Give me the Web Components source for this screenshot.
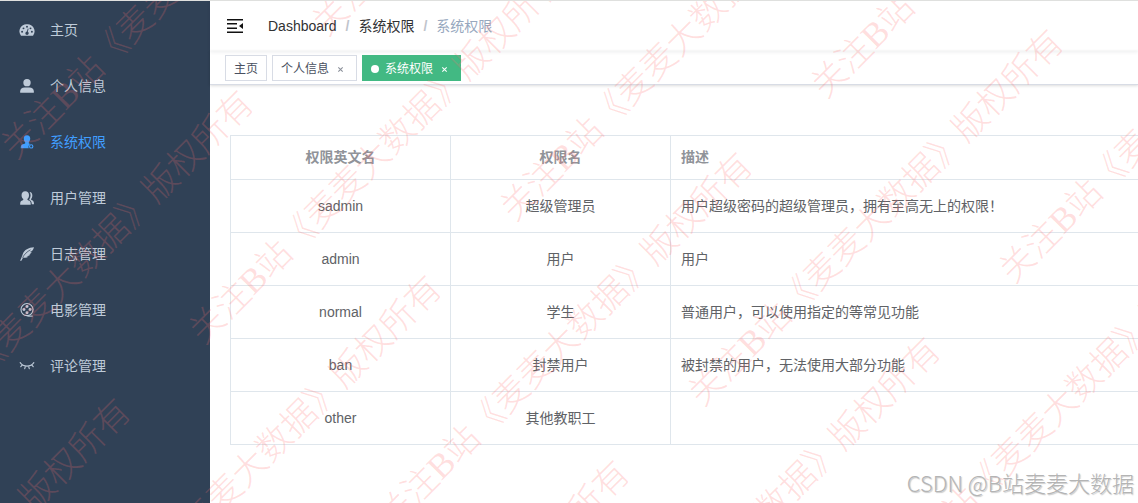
<!DOCTYPE html>
<html lang="zh-CN">
<head>
<meta charset="utf-8">
<meta name="viewport" content="width=device-width, initial-scale=1">
<title>系统权限</title>
<style>
  body {
    margin: 0;
    font: 14px/20px "Liberation Sans", "Noto Sans CJK SC", sans-serif;
    color: #606266;
    background: #fff;
  }
</style>
</head>
<body>
<admin-app></admin-app>

<script>
const ICONS = {
  dashboard: `<path fill-rule="evenodd" d="M8 1.500a8 8 0 0 0-7.200 12.500q.3.600 1 .6h12.400q.7 0 1-.6A8 8 0 0 0 8 1.500zM8 3.200a1.100 1.100 0 1 1 0 2.200 1.100 1.100 0 0 1 0-2.200zM4 5a1.100 1.100 0 1 1 0 2.200A1.100 1.100 0 0 1 4 5zM12 5a1.100 1.100 0 1 1 0 2.200A1.100 1.100 0 0 1 12 5zM2.400 8.900a1.100 1.100 0 1 1 0 2.200 1.100 1.100 0 0 1 0-2.200zM13.600 8.900a1.100 1.100 0 1 1 0 2.200 1.100 1.100 0 0 1 0-2.200zM8.900 6.300l.9.200-.9 3.500a1.900 1.900 0 1 1-1-.2z"/>`,
  user: `<circle cx="8" cy="4.200" r="4.200"/><path d="M.2 15.800v-1.600c0-2.800 2.200-4.600 5-4.600h5.600c2.800 0 5 1.800 5 4.600v1.600z"/>`,
  system: `<path d="M8 .2c2.500 0 3.900 1.700 3.700 4.200-.1 1.900-.8 3-1.600 3.900v1.400l2 .7a3.300 3.300 0 0 0-2.100 4.600H.8c.1-3 .6-3.700 2.500-4.400l2.600-.9V8.300C5 7.400 4.400 6.300 4.300 4.400 4.100 1.900 5.500.2 8 .2z"/><circle cx="12.800" cy="13" r="1.900" fill="none" stroke="currentColor" stroke-width="1.300"/>`,
  people: `<path d="M6 .2c2.900 0 4.500 2 4.300 4.800-.1 1.900-.9 3.300-1.900 4.200.1 1 .3 1.200 1.500 1.700 2 .8 2.400 1.700 2.400 4.900H.2c0-3.200.4-4.100 2.300-4.900 1.100-.5 1.300-.8 1.300-1.700C2.800 8.300 1.900 6.900 1.800 5 1.600 2.200 3.200.2 6 .2z"/><path d="M11 1.100c2 .2 3.200 1.800 3.100 4.200-.1 1.700-.7 2.900-1.500 3.700.1.700.3 1 1.300 1.500 1.600.8 2.100 1.900 2.100 4.700h-2.500c-.1-2.600-.8-3.800-2.400-4.600-.7-.3-.7-.8-.2-1.600 1.500-2.400 1.700-5.300.1-7.900z"/>`,
  feather: `<path d="M16 .2C9.600.4 5 3.200 3.200 8 2.300 10.600 1.500 13 0 15.800h1.600l2-3.900c2 .6 4.200.4 6-.7l-2.300-.6c1.900 0 3.500-.7 4.600-1.900l-2.500-.3c1.800-.3 3.200-1.100 4-2.500l-2.300-.1C13.700 5.100 15.200 3.100 16 .2z"/><path d="M2.900 12.200C5 8.200 8 5.300 12 3.200" fill="none" stroke="#304156" stroke-width=".8"/>`,
  film: `<g fill="none" stroke="currentColor" stroke-width="1.300"><circle cx="8" cy="7.500" r="6.900"/><path d="M8.500 15h6"/></g><circle cx="8" cy="3.900" r="1.700"/><circle cx="4.500" cy="7.500" r="1.700"/><circle cx="11.500" cy="7.500" r="1.700"/><circle cx="8" cy="11.100" r="1.700"/>`,
  eye: `<path d="M.2 4.200c3.600 5.200 12 5.200 15.600 0M2.700 6.700L.9 8.800M6.200 8.400l-.8 2.700M9.800 8.400l.8 2.700M13.300 6.700l1.800 2.100" fill="none" stroke="currentColor" stroke-width="1.300" stroke-linecap="round"/>`,
  fold: `<path d="M0 1h16v1.600H0zM0 5h10v1.600H0zM0 9.400h10V11H0zM0 13.400h16V15H0zM16 5v6l-4-3z"/>`,
  close: `<path d="M3 3l10 10M13 3L3 13" fill="none" stroke="currentColor" stroke-width="2.400"/>`
};

class SvgIcon extends HTMLElement {
  connectedCallback() {
    this.attachShadow({ mode: 'open' });
    this.shadowRoot.innerHTML = `
      <style>
        :host { display: block; width: 14px; height: 14px; flex: none; }
        svg { display: block; width: 100%; height: 100%; fill: currentColor; overflow: visible; }
      </style>
      <svg viewBox="0 0 16 16" aria-hidden="true">${ICONS[this.getAttribute('name')]}</svg>
    `;
  }
}
customElements.define('svg-icon', SvgIcon);

class MenuItem extends HTMLElement {
  connectedCallback() {
    this.attachShadow({ mode: 'open' });
    this.shadowRoot.innerHTML = `
      <style>
        :host { display: block; }
        a {
          display: flex;
          align-items: center;
          gap: 16px;
          height: 56px;
          padding: 0 20px;
          color: #bfcbd9;
          text-decoration: none;
        }
        a:hover { background: #263445; }
        :host([active]) a { color: #409eff; }
      </style>
      <a href="#${this.getAttribute('icon')}">
        <svg-icon name="${this.getAttribute('icon')}"></svg-icon>
        <span><slot></slot></span>
      </a>
    `;
  }
}
customElements.define('menu-item', MenuItem);

class SideBar extends HTMLElement {
  connectedCallback() {
    this.attachShadow({ mode: 'open' });
    this.shadowRoot.innerHTML = `
      <style>
        :host { display: block; flex: none; width: 210px; background: #304156; }
        nav { padding-top: 1px; }
      </style>
      <nav><slot></slot></nav>
    `;
  }
}
customElements.define('side-bar', SideBar);

class NavBar extends HTMLElement {
  connectedCallback() {
    this.attachShadow({ mode: 'open' });
    this.shadowRoot.innerHTML = `
      <style>
        :host {
          display: flex;
          align-items: center;
          height: 50px;
          box-shadow: 0 1px 4px rgba(0, 21, 41, .08);
        }
        button {
          padding: 0 17px;
          border: 0;
          background: none;
          color: #111;
          cursor: pointer;
        }
        svg-icon { width: 16px; height: 16px; }
        ol {
          display: flex;
          gap: 9px;
          margin: 0;
          padding: 0 8px;
          list-style: none;
          color: #97a8be;
        }
        li { display: flex; gap: 9px; }
        li + li::before { content: "/"; color: #c0c4cc; font-weight: 700; }
        a { color: #303133; text-decoration: none; }
      </style>
      <button type="button" aria-label="收起菜单"><svg-icon name="fold"></svg-icon></button>
      <ol>
        <li><a href="#dashboard">Dashboard</a></li>
        <li><a href="#system">系统权限</a></li>
        <li>系统权限</li>
      </ol>
    `;
  }
}
customElements.define('nav-bar', NavBar);

class TagItem extends HTMLElement {
  connectedCallback() {
    const closable = this.hasAttribute('closable');
    this.attachShadow({ mode: 'open' });
    this.shadowRoot.innerHTML = `
      <style>
        :host {
          display: flex;
          align-items: center;
          box-sizing: border-box;
          height: 26px;
          padding: 2px 8px 0;
          border: 1px solid #d8dce5;
          background: #fff;
          color: #495060;
          font-size: 12px;
        }
        :host([active]) { background: #42b983; border-color: #42b983; color: #fff; }
        :host([active])::before {
          content: "";
          width: 8px;
          height: 8px;
          margin-right: 6px;
          border-radius: 50%;
          background: #fff;
        }
        a { color: inherit; text-decoration: none; }
        button {
          display: flex;
          align-items: center;
          justify-content: center;
          width: 16px;
          height: 16px;
          margin-left: 3px;
          padding: 0;
          border: 0;
          border-radius: 50%;
          background: none;
          color: #8a8f99;
          cursor: pointer;
        }
        :host([active]) button { color: #fff; }
        svg-icon { width: 7px; height: 7px; }
      </style>
      <a href="#tag"><slot></slot></a>
      ${closable ? '<button type="button" aria-label="关闭"><svg-icon name="close"></svg-icon></button>' : ''}
    `;
    if (closable) {
      this.shadowRoot.querySelector('button').addEventListener('click', () => this.remove());
    }
  }
}
customElements.define('tag-item', TagItem);

class TagsView extends HTMLElement {
  connectedCallback() {
    this.attachShadow({ mode: 'open' });
    this.shadowRoot.innerHTML = `
      <style>
        :host {
          display: flex;
          gap: 5px;
          box-sizing: border-box;
          height: 34px;
          padding: 4px 15px 0;
          border-bottom: 1px solid #d8dce5;
          box-shadow: 0 1px 3px 0 rgba(0, 0, 0, .12), 0 0 3px 0 rgba(0, 0, 0, .04);
        }
      </style>
      <slot></slot>
    `;
  }
}
customElements.define('tags-view', TagsView);

const ROLES = [
  ['sadmin', '超级管理员', '用户超级密码的超级管理员，拥有至高无上的权限！'],
  ['admin', '用户', '用户'],
  ['normal', '学生', '普通用户，可以使用指定的等常见功能'],
  ['ban', '封禁用户', '被封禁的用户，无法使用大部分功能'],
  ['other', '其他教职工', '']
];

class RoleTable extends HTMLElement {
  connectedCallback() {
    const rows = ROLES.map(row => `<tr>${row.map(cell => `<td>${cell}</td>`).join('')}</tr>`).join('');

    this.attachShadow({ mode: 'open' });
    this.shadowRoot.innerHTML = `
      <style>
        :host { display: block; }
        table {
          width: 100%;
          table-layout: fixed;
          border-spacing: 0;
          border-top: 1px solid #dfe6ec;
          border-left: 1px solid #dfe6ec;
        }
        th, td {
          box-sizing: border-box;
          height: 53px;
          padding: 0 10px;
          border-right: 1px solid #dfe6ec;
          border-bottom: 1px solid #dfe6ec;
          text-align: center;
        }
        th { width: 220px; height: 44px; padding-bottom: 2px; color: #909399; font-weight: 700; }
        th:last-child { width: auto; }
        th:last-child, td:last-child { text-align: left; border-right: 0; }
      </style>
      <table>
        <thead><tr><th>权限英文名</th><th>权限名</th><th>描述</th></tr></thead>
        <tbody>${rows}</tbody>
      </table>
    `;
  }
}
customElements.define('role-table', RoleTable);

// Diagonal watermark, repeated on a staggered grid over the whole page
class PageWatermark extends HTMLElement {
  connectedCallback() {
    this.attachShadow({ mode: 'open' });
    this.draw();
    window.addEventListener('resize', () => this.draw());
  }

  draw() {
    const text = this.getAttribute('text');
    const w = window.innerWidth;
    const h = window.innerHeight;
    let marks = '';

    for (let a = -8; a <= 12; a++) {
      for (let b = -8; b <= 12; b++) {
        const x = 8 + a * 311 + b * 188;
        const y = 152 - a * 123 + b * 185;
        // a mark runs about 370px up and to the right of its start
        if (x > w || y < 0 || x < -370 || y > h + 370) continue;
        marks += `<span style="left:${x}px;top:${y}px">${text}</span>`;
      }
    }

    this.shadowRoot.innerHTML = `
      <style>
        :host {
          position: absolute;
          inset: 0;
          overflow: hidden;
          pointer-events: none;
          font: 300 35px/40px "Liberation Serif", "Noto Sans CJK SC", serif;
          color: rgba(255, 110, 110, .22);
        }
        span {
          position: absolute;
          margin-top: -20px;
          white-space: nowrap;
          transform: rotate(-45deg);
          transform-origin: left center;
        }
      </style>
      ${marks}
    `;
  }
}
customElements.define('page-watermark', PageWatermark);

class AuthorMark extends HTMLElement {
  connectedCallback() {
    this.attachShadow({ mode: 'open' });
    this.shadowRoot.innerHTML = `
      <style>
        :host {
          position: absolute;
          right: 4px;
          bottom: 5px;
          font: 300 22px/32px "Noto Sans CJK SC", sans-serif;
          color: #b4b4b4;
          text-shadow: -1px -1px 0 #fff, 1px 1px 1px rgba(120, 120, 120, .4);
          pointer-events: none;
        }
      </style>
      <slot></slot>
    `;
  }
}
customElements.define('author-mark', AuthorMark);

class AdminApp extends HTMLElement {
  connectedCallback() {
    this.attachShadow({ mode: 'open' });
    this.shadowRoot.innerHTML = `
      <style>
        :host {
          display: flex;
          position: relative;
          box-sizing: border-box;
          min-height: 100vh;
          border-top: 1px solid #dfe0de;
          overflow: hidden;
        }
        .main { flex: 1; min-width: 0; }
        main { padding: 50px 0 50px 20px; }
      </style>
      <side-bar>
        <menu-item icon="dashboard">主页</menu-item>
        <menu-item icon="user">个人信息</menu-item>
        <menu-item icon="system" active>系统权限</menu-item>
        <menu-item icon="people">用户管理</menu-item>
        <menu-item icon="feather">日志管理</menu-item>
        <menu-item icon="film">电影管理</menu-item>
        <menu-item icon="eye">评论管理</menu-item>
      </side-bar>
      <div class="main">
        <nav-bar></nav-bar>
        <tags-view>
          <tag-item>主页</tag-item>
          <tag-item closable>个人信息</tag-item>
          <tag-item closable active>系统权限</tag-item>
        </tags-view>
        <main><role-table></role-table></main>
      </div>
      <page-watermark text="关注B站《麦麦大数据》版权所有"></page-watermark>
      <author-mark>CSDN @B站麦麦大数据</author-mark>
    `;
  }
}
customElements.define('admin-app', AdminApp);
</script>
</body>
</html>
